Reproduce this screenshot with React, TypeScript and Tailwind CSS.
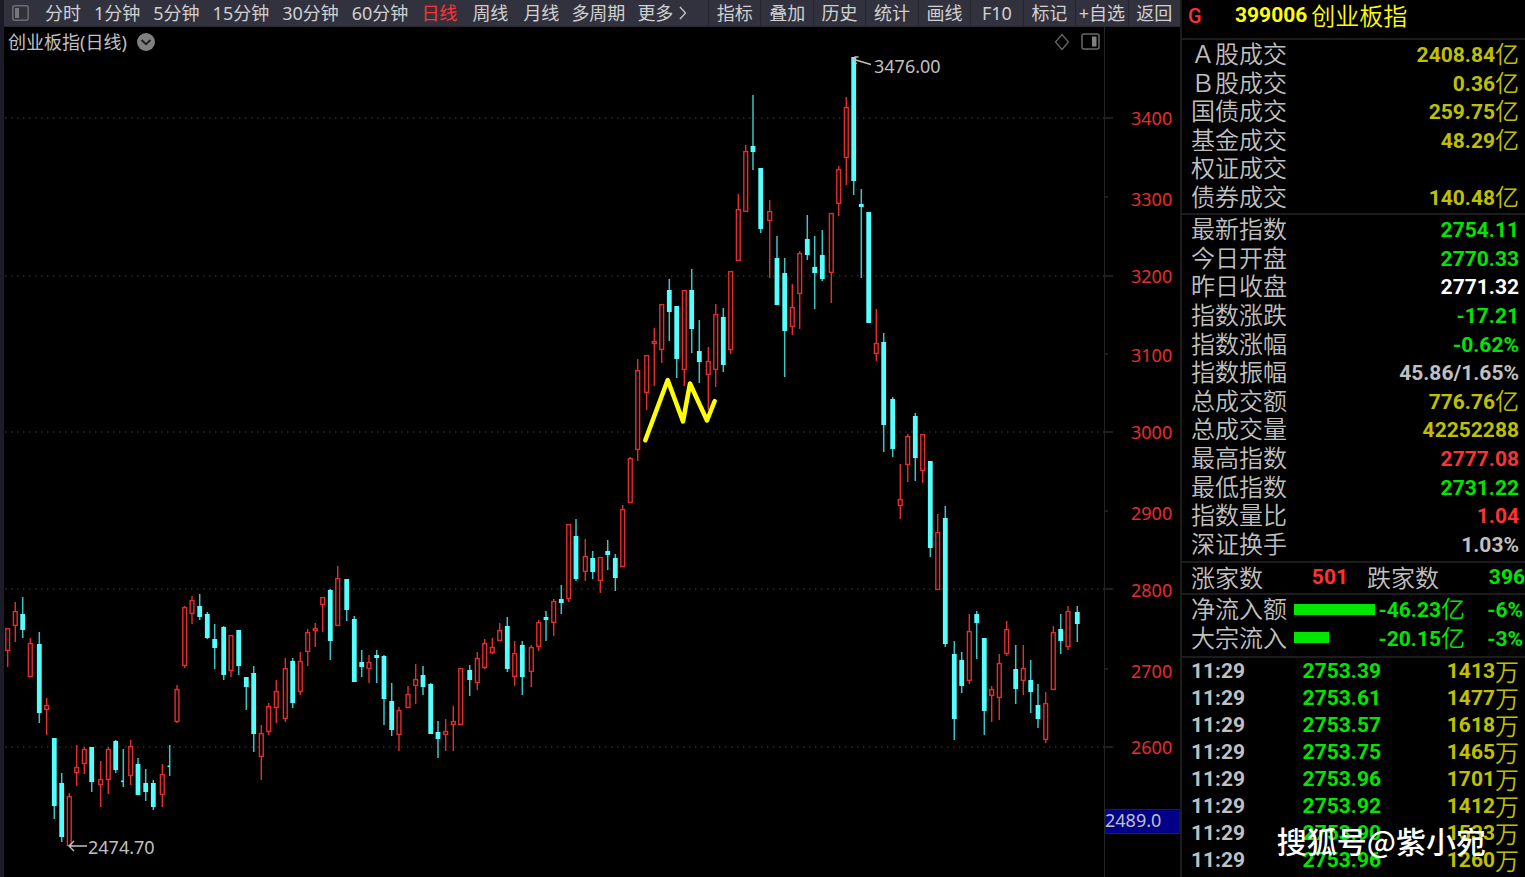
import React from "react";

type Candle = [kind: "u" | "d", x: number, high: number, top: number, bottom: number, low: number];

const candles: Candle[] = [
  ["u", 7.7, 628, 628, 651, 667], ["u", 15.3, 602, 611, 626, 642], ["d", 22.7, 597, 614, 630, 638],
  ["u", 30.3, 638, 643, 677, 677], ["d", 39.3, 632, 644, 713, 723], ["u", 46.7, 698, 705, 710, 735],
  ["d", 54.3, 738, 738, 806, 819], ["d", 61.7, 773, 783, 837, 842], ["u", 69.3, 793, 796, 846, 846],
  ["u", 76.7, 745, 767, 773, 786], ["u", 84.3, 747, 749, 764, 774], ["d", 91.7, 747, 747, 782, 792],
  ["u", 100.7, 761, 779, 785, 807], ["u", 108.3, 747, 749, 780, 794], ["d", 115.7, 740, 741, 770, 773],
  ["d", 123.3, 749, 781, 782, 787], ["u", 130.7, 740, 746, 776, 785], ["d", 138, 758, 764, 795, 795],
  ["d", 145.7, 769, 783, 792, 801], ["d", 153.3, 780, 783, 807, 810], ["u", 162.3, 764, 774, 795, 807],
  ["d", 169.7, 745, 766, 767, 776], ["u", 177, 685, 689, 722, 723], ["u", 184.7, 606, 607, 666, 668],
  ["u", 192, 596, 600, 614, 624], ["d", 199.7, 594, 606, 617, 620], ["d", 207.3, 612, 614, 638, 639],
  ["d", 214.7, 624, 639, 648, 669], ["d", 223.7, 626, 627, 675, 680], ["u", 231, 635, 635, 671, 677],
  ["d", 238.7, 630, 630, 666, 675], ["d", 246.3, 677, 677, 687, 710], ["d", 253.7, 666, 673, 734, 752],
  ["u", 261.3, 725, 733, 757, 780], ["u", 268.7, 703, 706, 732, 735], ["u", 276.3, 680, 691, 708, 723],
  ["u", 285.3, 658, 668, 719, 722], ["d", 292.7, 658, 661, 703, 708], ["u", 300.3, 652, 661, 692, 695],
  ["u", 307.7, 629, 632, 652, 666], ["u", 315.3, 623, 628, 631, 647], ["u", 322.7, 597, 597, 605, 632],
  ["d", 330.3, 589, 590, 641, 660], ["u", 337.7, 566, 578, 626, 626], ["d", 346.7, 579, 579, 610, 621],
  ["d", 354.3, 616, 619, 682, 682], ["d", 361.7, 650, 662, 667, 677], ["u", 369, 655, 662, 669, 683],
  ["d", 376.7, 650, 655, 658, 683], ["d", 384, 655, 656, 699, 725], ["d", 391.7, 683, 701, 730, 736],
  ["u", 399, 707, 710, 735, 751], ["u", 408, 686, 694, 708, 708], ["u", 415.7, 664, 679, 686, 704],
  ["d", 423, 666, 675, 687, 695], ["d", 430.7, 683, 684, 734, 734], ["d", 438, 721, 732, 739, 758],
  ["u", 445.7, 719, 731, 735, 751], ["u", 453.3, 706, 721, 725, 751], ["u", 460.7, 668, 668, 725, 725],
  ["d", 469.7, 665, 670, 680, 696], ["u", 477.3, 652, 658, 683, 690], ["u", 484.7, 639, 643, 668, 669],
  ["u", 492.3, 638, 647, 653, 654], ["u", 499.7, 623, 630, 641, 641], ["d", 507.3, 617, 626, 669, 672],
  ["u", 514.7, 641, 653, 677, 686], ["d", 522.3, 641, 645, 677, 695], ["u", 531.3, 645, 647, 672, 687],
  ["u", 538.7, 620, 622, 647, 651], ["d", 546, 611, 617, 620, 641], ["u", 553.7, 599, 601, 623, 636],
  ["d", 561.3, 585, 599, 603, 614], ["u", 568.7, 524, 524, 599, 602], ["d", 576, 519, 536, 579, 581],
  ["u", 585.3, 539, 556, 572, 581], ["d", 592.7, 551, 558, 572, 579], ["u", 600.3, 557, 557, 581, 593],
  ["d", 607.7, 540, 551, 555, 570], ["d", 615.3, 554, 558, 578, 591], ["u", 622.7, 505, 509, 567, 567],
  ["u", 630.3, 457, 458, 503, 503], ["u", 637.7, 359, 370, 450, 461], ["u", 646.7, 355, 355, 393, 410],
  ["u", 654.3, 328, 341, 344, 386], ["u", 661.7, 304, 304, 350, 363], ["d", 669.3, 279, 290, 312, 341],
  ["d", 676.7, 306, 306, 359, 378], ["u", 684.3, 290, 290, 370, 386], ["d", 691.7, 269, 290, 329, 353],
  ["d", 699.3, 320, 351, 362, 383], ["u", 708.3, 347, 361, 375, 410], ["u", 715.7, 304, 314, 370, 387],
  ["d", 723.3, 308, 317, 365, 372], ["u", 730.7, 271, 271, 350, 354], ["u", 738.3, 194, 209, 261, 261],
  ["u", 745.7, 145, 151, 212, 212], ["d", 753, 95, 146, 152, 170], ["d", 760.7, 168, 168, 229, 233],
  ["u", 769.7, 200, 211, 221, 278], ["d", 777, 236, 258, 305, 305], ["d", 784.7, 258, 273, 331, 377],
  ["u", 792.3, 284, 307, 327, 335], ["u", 799.7, 251, 253, 294, 329], ["d", 807.3, 215, 239, 255, 260],
  ["d", 814.7, 236, 267, 273, 309], ["d", 822.3, 230, 255, 279, 281], ["u", 831.3, 213, 213, 273, 303],
  ["u", 838.7, 166, 169, 204, 216], ["u", 846.3, 97, 107, 158, 185], ["d", 853.7, 57, 57, 181, 195],
  ["d", 861.3, 189, 204, 207, 278], ["d", 868.7, 212, 212, 323, 323], ["u", 876.3, 309, 343, 354, 361],
  ["d", 883.7, 333, 342, 425, 452], ["d", 892.7, 397, 399, 449, 457], ["u", 900.3, 464, 499, 506, 519],
  ["u", 907.7, 434, 436, 465, 482], ["d", 915.3, 413, 416, 458, 481], ["u", 922.7, 434, 434, 471, 483],
  ["d", 930.3, 461, 461, 548, 557], ["u", 937.7, 514, 532, 590, 590], ["d", 945.3, 506, 518, 644, 647],
  ["d", 954.3, 641, 654, 719, 740], ["d", 961.7, 652, 660, 686, 693], ["u", 969.3, 614, 631, 681, 684],
  ["d", 976.7, 611, 614, 623, 659], ["d", 984.3, 638, 638, 711, 735], ["u", 991.7, 686, 689, 696, 722],
  ["u", 999.3, 654, 663, 698, 720], ["u", 1006.7, 621, 629, 654, 656], ["d", 1015.7, 645, 669, 689, 704],
  ["u", 1023.3, 645, 668, 681, 695], ["d", 1030.7, 660, 680, 692, 713], ["d", 1038, 684, 705, 719, 728],
  ["u", 1045.7, 692, 703, 740, 743], ["u", 1053.3, 626, 632, 690, 690], ["d", 1060.7, 614, 629, 641, 654],
  ["u", 1068, 606, 611, 647, 650], ["d", 1077.3, 606, 612, 624, 642],
];

const axis = [
  { label: "3400", y: 118, tick: 118, major: true },
  { label: "3300", y: 199, tick: 197, major: false },
  { label: "3200", y: 276, tick: 276, major: true },
  { label: "3100", y: 355, tick: 354, major: false },
  { label: "3000", y: 432, tick: 432, major: true },
  { label: "2900", y: 513, tick: 511, major: false },
  { label: "2800", y: 590, tick: 589, major: true },
  { label: "2700", y: 671, tick: 669, major: false },
  { label: "2600", y: 747, tick: 747, major: true },
];

const minutePeriods = ["分时", "1分钟", "5分钟", "15分钟", "30分钟", "60分钟"];
const dayPeriods = ["日线", "周线", "月线"];
const tools = ["指标", "叠加", "历史", "统计", "画线", "F10", "标记", "+自选", "返回"];

const yellow = "text-[#c0c000]";
const green = "text-[#00e600]";
const red = "text-[#ff3232]";
const grey = "text-[#c0c0c0]";

type Row = { label: string; value: string; unit?: string; tone: string };

const turnover: Row[] = [
  { label: "Ａ股成交", value: "2408.84", unit: "亿", tone: yellow },
  { label: "Ｂ股成交", value: "0.36", unit: "亿", tone: yellow },
  { label: "国债成交", value: "259.75", unit: "亿", tone: yellow },
  { label: "基金成交", value: "48.29", unit: "亿", tone: yellow },
  { label: "权证成交", value: "", tone: yellow },
  { label: "债券成交", value: "140.48", unit: "亿", tone: yellow },
];

const quote: Row[] = [
  { label: "最新指数", value: "2754.11", tone: green },
  { label: "今日开盘", value: "2770.33", tone: green },
  { label: "昨日收盘", value: "2771.32", tone: "text-white" },
  { label: "指数涨跌", value: "-17.21", tone: green },
  { label: "指数涨幅", value: "-0.62%", tone: green },
  { label: "指数振幅", value: "45.86/1.65%", tone: grey },
  { label: "总成交额", value: "776.76", unit: "亿", tone: yellow },
  { label: "总成交量", value: "42252288", tone: yellow },
  { label: "最高指数", value: "2777.08", tone: red },
  { label: "最低指数", value: "2731.22", tone: green },
  { label: "指数量比", value: "1.04", tone: red },
  { label: "深证换手", value: "1.03%", tone: grey },
];

const ticks = [
  ["2753.39", "1413"], ["2753.61", "1477"], ["2753.57", "1618"], ["2753.75", "1465"],
  ["2753.96", "1701"], ["2753.92", "1412"], ["2753.90", "1533"], ["2753.96", "1260"],
];

const numeric = "font-['Roboto','Noto_Sans_CJK_SC',sans-serif] text-[21px] font-bold";
const hanzi = "font-['Noto_Sans_CJK_SC',sans-serif] text-2xl leading-6 pb-0.5 font-[350]";

function Amount({ value, unit, tone }: { value: string; unit?: string; tone: string }) {
  return (
    <span className={`flex items-center leading-6 ${numeric} ${tone}`}>
      <span className="pt-0.5">{value}</span>
      {unit && <span className={hanzi}>{unit}</span>}
    </span>
  );
}

function Rows({ rows }: { rows: Row[] }) {
  return (
    <>
      {rows.map((r) => (
        <div key={r.label} className="flex min-h-0 items-center justify-between">
          <dt className={`${hanzi} ${grey}`}>{r.label}</dt>
          <dd>
            <Amount value={r.value} unit={r.unit} tone={r.tone} />
          </dd>
        </div>
      ))}
    </>
  );
}

function Toolbar() {
  return (
    <nav className="flex h-[27px] items-stretch justify-between border-b border-[#26262c] bg-[#32323f] pl-2 text-lg leading-[26px] whitespace-nowrap text-[#d0d0d0]">
      <div className="flex items-center">
        <button type="button" aria-label="侧栏" className="mr-4">
          <svg width="17" height="16" viewBox="0 0 17 16" fill="none">
            <rect x="0.8" y="0.8" width="15.4" height="14.4" rx="2" stroke="#6c6c70" strokeWidth="1.5" />
            <rect x="3" y="3" width="4" height="10" fill="#77777b" />
          </svg>
        </button>
        <div className="mr-[13px] flex gap-[13px]">
          {minutePeriods.map((p) => (
            <button type="button" key={p}>{p}</button>
          ))}
        </div>
        <div className="mr-3 flex gap-[15px]">
          {dayPeriods.map((p) => (
            <button type="button" key={p} className={p === "日线" ? "text-[#ff3232]" : ""}>{p}</button>
          ))}
        </div>
        <div className="flex gap-3">
          <button type="button">多周期</button>
          <button type="button" className="flex items-center gap-1.5">
            更多
            <svg width="8" height="14" viewBox="0 0 8 14" fill="none" stroke="#c8c8c8" strokeWidth="1.3">
              <path d="M1 1L6.5 7L1 13" />
            </svg>
          </button>
        </div>
      </div>
      <div className="grid w-[472px] grid-cols-9">
        {tools.map((t) => (
          <button type="button" key={t} className="border-l border-[#24242a] text-center">
            {t}
          </button>
        ))}
      </div>
    </nav>
  );
}

function ChartHeader() {
  return (
    <div className="flex h-[29px]">
      <div className="flex flex-1 items-center justify-between border-r border-[#242424] pr-1 pl-1">
        <div className="flex items-center gap-2.5">
          <h1 className="text-lg leading-7 text-[#c0c0c0]">创业板指(日线)</h1>
          <button type="button" aria-label="展开">
            <svg width="18" height="18" viewBox="0 0 18 18">
              <circle cx="9" cy="9" r="9" fill="#808080" />
              <path d="M4.5 7L9 11.2L13.5 7" fill="none" stroke="#202020" strokeWidth="2" />
            </svg>
          </button>
        </div>
        <div className="flex items-center gap-2.5">
          <button type="button" aria-label="标注">
            <svg width="18" height="18" viewBox="0 0 18 18" fill="none" stroke="#6a6a6a" strokeWidth="1.2">
              <path d="M9 1.5L15.5 9L9 16.5L2.5 9Z" />
            </svg>
          </button>
          <button type="button" aria-label="右侧栏">
            <svg width="19" height="17" viewBox="0 0 19 17" fill="none">
              <rect x="1" y="1" width="17" height="15" rx="2" stroke="#6a6a6a" strokeWidth="1.5" />
              <rect x="11" y="3.5" width="4.5" height="10" fill="#808080" />
            </svg>
          </button>
        </div>
      </div>
      <div className="w-[75px]" />
    </div>
  );
}

function CandleMark({ c }: { c: Candle }) {
  const [kind, x, high, top, bottom, low] = c;
  const h = bottom - top;
  if (kind === "d") {
    return (
      <g>
        <rect x={x - 0.75} y={high} width="1.5" height={low - high} fill="#3fc4c4" />
        {h > 1 ? (
          <rect x={x - 2.4} y={top} width="4.8" height={h} fill="#54ffff" />
        ) : (
          <rect x={x - 2.2} y={top - 0.5} width="2.2" height="1.6" fill="#54ffff" />
        )}
      </g>
    );
  }
  return (
    <g fill="none" stroke="#e62d2d" strokeWidth="1.4">
      {high < top && <path d={`M${x} ${high}V${top}`} />}
      {low > bottom && <path d={`M${x} ${bottom}V${low}`} />}
      <rect x={x - 1.9} y={top + 0.6} width="3.8" height={Math.max(h - 1.2, 1)} />
    </g>
  );
}

function Chart() {
  return (
    <svg viewBox="4 56 1176 821" className="block w-full overflow-visible" role="img" aria-label="创业板指日线">
      <g stroke="#2c2c2c" strokeWidth="1.3" strokeDasharray="1.5 4.5">
        {axis.filter((a) => a.major).map((a) => (
          <path key={a.label} d={`M5 ${a.tick}H1104`} />
        ))}
      </g>
      <path d="M1104.5 56V877" stroke="#242424" />
      {axis.map((a) => (
        <g key={a.label}>
          <path d={`M1105 ${a.tick}H${a.major ? 1113 : 1108}`} stroke="#3a3a3a" />
          <text x="1131" y={a.y + 7} fill="#e62d2d" fontSize="18">{a.label}</text>
        </g>
      ))}
      {candles.map((c) => (
        <CandleMark key={c[1]} c={c} />
      ))}
      <path
        d="M645.3 440.3L667.7 380L683 421.5L690 383.5L707 420.5L714.7 401"
        fill="none" stroke="#ffff00" strokeWidth="4.5" strokeLinecap="round" strokeLinejoin="round"
      />
      <g fill="none" stroke="#c0c0c0" strokeWidth="1.4">
        <path d="M87 846H69M74 841L69 846L74 851" />
        <path d="M871 64.5L854 59.5M858.5 57H855L853.5 60L856.5 64" />
      </g>
      <g fill="#c0c0c0" fontSize="18">
        <text x="88" y="854">2474.70</text>
        <text x="874" y="73">3476.00</text>
      </g>
      <rect x="1105" y="809.5" width="75" height="24" fill="#000088" stroke="#242424" />
      <text x="1105" y="827" fill="#c0c0c0" fontSize="18">2489.0</text>
    </svg>
  );
}

function Flow({ label, bar, value, pct }: { label: string; bar: string; value: string; pct: string }) {
  return (
    <div className="flex min-h-0 items-center">
      <dt className={`${hanzi} ${grey}`}>{label}</dt>
      <dd className="flex flex-1 items-center">
        <span className="ml-[7px] flex w-[81px]">
          <span className={`h-[11px] bg-[#00e600] ${bar}`} />
        </span>
        <span className="ml-auto">
          <Amount value={value} unit="亿" tone={green} />
        </span>
        <span className={`w-[58px] pt-0.5 text-right leading-6 ${numeric} ${green}`}>{pct}</span>
      </dd>
    </div>
  );
}

function QuotePanel() {
  const line = "border-t-2 border-[#1c1c1c]";
  return (
    <aside className="relative w-[345px] shrink-0 border-l-2 border-[#1c1c1c]">
      <header className="flex h-[38px] items-center pb-1.5 pl-1.5">
        <span className="w-[47px] font-['Roboto',sans-serif] text-xl font-medium text-[#ff3232]">G</span>
        <h2 className="flex items-center gap-1 text-[#ffff00]">
          <span className={numeric}>399006</span>
          <span className={hanzi}>创业板指</span>
        </h2>
      </header>
      <dl className={`grid h-[175px] auto-rows-fr ${line} pr-1.5 pb-0.5 pl-[9px]`}>
        <Rows rows={turnover} />
      </dl>
      <dl className={`grid h-[348px] auto-rows-fr ${line} pr-1.5 pb-[3px] pl-[9px]`}>
        <Rows rows={quote} />
      </dl>
      <dl className={`flex h-8 items-center ${line} pl-[9px]`}>
        <dt className={`${hanzi} ${grey}`}>涨家数</dt>
        <dd className={`w-[85px] text-right ${numeric} ${red}`}>501</dd>
        <dt className={`ml-[19px] ${hanzi} ${grey}`}>跌家数</dt>
        <dd className={`flex-1 text-right ${numeric} ${green}`}>396</dd>
      </dl>
      <dl className={`grid h-[63px] auto-rows-fr ${line} pr-0.5 pb-1 pl-[9px]`}>
        <Flow label="净流入额" bar="w-full" value="-46.23" pct="-6%" />
        <Flow label="大宗流入" bar="w-[35px]" value="-20.15" pct="-3%" />
      </dl>
      <div className={`${line} pr-1.5 pl-[9px]`}>
        <table className={`w-full table-fixed ${numeric}`}>
          <tbody>
            {ticks.map(([price, volume], i) => (
              <tr key={i} className="h-[27px] leading-[27px]">
                <td className={`w-[76px] p-0 ${grey}`}>11:29</td>
                <td className={`w-[114px] p-0 text-right ${green}`}>{price}</td>
                <td className={`p-0 ${yellow}`}>
                  <div className="flex h-[27px] items-center justify-end">
                    {volume}
                    <span className={hanzi}>万</span>
                  </div>
                </td>
              </tr>
            ))}
          </tbody>
        </table>
      </div>
      <p className="absolute right-[39px] bottom-[17px] font-['Noto_Sans_CJK_SC',sans-serif] text-3xl leading-10 font-medium whitespace-nowrap text-white">
        搜狐号@紫小宛
      </p>
    </aside>
  );
}

export default function App() {
  return (
    <div className="flex min-h-screen bg-black font-['Noto_Sans','Noto_Sans_CJK_SC',sans-serif]">
      <main className="min-w-0 flex-1 border-l-4 border-[#1b1c28]">
        <Toolbar />
        <ChartHeader />
        <Chart />
      </main>
      <QuotePanel />
    </div>
  );
}
